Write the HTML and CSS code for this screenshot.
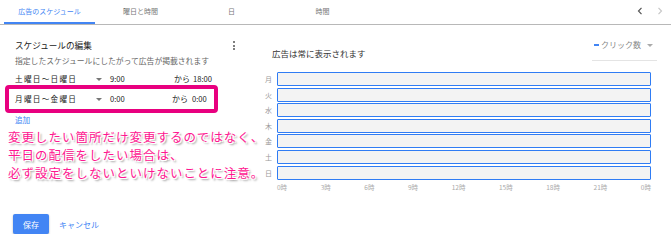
FILE: index.html
```html
<!DOCTYPE html>
<html lang="ja">
<head>
    <meta charset="UTF-8">
    <title>広告のスケジュール</title>
    <link rel="stylesheet" href="styles.css">
</head>
<body>

    <!-- タブ -->
    <div class="tabs">
        <div class="tab active">広告のスケジュール</div>
        <div class="tab">曜日と時間</div>
        <div class="tab">日</div>
        <div class="tab">時間</div>
        <div class="tab-nav">
            <svg width="6" height="8" viewBox="0 0 6 8"><path d="M4.5 0.8 L1.5 4 L4.5 7.2" fill="none" stroke="#555" stroke-width="1.2"/></svg>
            <svg width="6" height="8" viewBox="0 0 6 8"><path d="M1.5 0.8 L4.5 4 L1.5 7.2" fill="none" stroke="#c8c8c8" stroke-width="1.2"/></svg>
        </div>
    </div>

    <div class="content">
        <!-- スケジュールの編集 -->
        <div class="editor">
            <div class="editor-head">
                <div class="editor-title">スケジュールの編集</div>
                <div class="kebab"><i></i><i></i><i></i></div>
            </div>
            <div class="editor-sub">指定したスケジュールにしたがって広告が掲載されます</div>

            <div class="slot">
                <span class="slot-day">土曜日〜日曜日</span>
                <span class="caret"></span>
                <span class="slot-time">9:00</span>
                <span class="slot-to">から</span>
                <span class="slot-time">18:00</span>
            </div>
            <div class="slot highlight">
                <span class="slot-day">月曜日〜金曜日</span>
                <span class="caret"></span>
                <span class="slot-time">0:00</span>
                <span class="slot-to">から</span>
                <span class="slot-time">0:00</span>
            </div>
            <a class="add" href="#">追加</a>

            <div class="note">
                <div>変更したい箇所だけ変更するのではなく、</div>
                <div>平日の配信をしたい場合は、</div>
                <div>必ず設定をしないといけないことに注意。</div>
            </div>
        </div>

        <!-- グラフ -->
        <div class="chart">
            <div class="chart-head">
                <div class="chart-title">広告は常に表示されます</div>
                <div class="metric"><span class="dash"></span>クリック数<span class="caret"></span></div>
            </div>
            <div class="days">
                <span class="day">月</span><div class="bar"></div>
                <span class="day">火</span><div class="bar"></div>
                <span class="day">水</span><div class="bar"></div>
                <span class="day">木</span><div class="bar"></div>
                <span class="day">金</span><div class="bar"></div>
                <span class="day">土</span><div class="bar"></div>
                <span class="day">日</span><div class="bar"></div>
            </div>
            <div class="axis">
                <span>0時</span><span>3時</span><span>6時</span><span>9時</span><span>12時</span>
                <span>15時</span><span>18時</span><span>21時</span><span>0時</span>
            </div>
        </div>
    </div>

    <div class="actions">
        <button class="save">保存</button>
        <a class="cancel" href="#">キャンセル</a>
    </div>

</body>
</html>
```

FILE: styles.css
```css
body {
    margin: 0;
    font-family: "Noto Sans CJK JP", "Noto Sans", sans-serif;
    background: #fff;
    color: #333;
}

/* タブ */
.tabs {
    display: flex;
    align-items: stretch;
    height: 24px;
    padding-left: 4px;
    border-bottom: 1px solid #b8b8b8;
}

.tab {
    width: 91px;
    font-size: 7px;
    line-height: 22px;
    text-align: center;
    color: #777;
}

.tab.active {
    color: #4285f4;
    border-bottom: 2px solid #4285f4;
}

.tab-nav {
    margin-left: auto;
    display: flex;
    gap: 14px;
    padding: 7px 8px 0 0;
}

/* メイン */
.content {
    display: flex;
    gap: 29px;
    padding-left: 15px;
    height: 165px;
}

.editor {
    width: 221px;
    padding-top: 14px;
}

.editor-head {
    display: flex;
    justify-content: space-between;
}

.editor-title {
    font-size: 8.6px;
    line-height: 12px;
    color: #222;
}

.kebab {
    display: flex;
    flex-direction: column;
    gap: 1.5px;
    padding: 2px 1px 0 0;
}

.kebab i {
    width: 2px;
    height: 2px;
    background: #555;
    border-radius: 50%;
}

.editor-sub {
    margin-top: 4px;
    font-size: 7.8px;
    line-height: 12px;
    color: #666;
}

.slot {
    display: grid;
    grid-template-columns: 81px 14px 64px 19px auto;
    align-items: center;
    margin-top: 6px;
    font-size: 7.6px;
    line-height: 12px;
    color: #222;
}

.slot-day {
    letter-spacing: 1.3px;
}

.caret {
    width: 0;
    height: 0;
    border-left: 3px solid transparent;
    border-right: 3px solid transparent;
    border-top: 3px solid #777;
    justify-self: start;
}

.slot-to {
    font-size: 8px;
}

.slot.highlight {
    grid-template-columns: 81px 14px 62px 20px auto;
    width: 199px;
    margin: 0 0 0 -10px;
    padding: 4px 0 4px 6px;
    border: 4px solid #e8007f;
    border-radius: 4px;
}

.add {
    display: block;
    margin-top: 1px;
    font-size: 7.6px;
    line-height: 12px;
    color: #4285f4;
    text-decoration: none;
}

.note {
    margin: 2px 0 0 -7px;
    white-space: nowrap;
    font-size: 12.4px;
    letter-spacing: 1.1px;
    line-height: 18px;
    color: #ff1690;
    text-shadow: 1px 1px 0 #fff, -1px -1px 0 #fff, 1px -1px 0 #fff, -1px 1px 0 #fff,
                 2px 2px 2px rgba(0, 0, 0, 0.45);
}

/* グラフ */
.chart {
    width: 392px;
    padding-top: 14px;
}

.chart-head {
    display: flex;
    justify-content: space-between;
    align-items: flex-start;
    margin-bottom: 11px;
}

.chart-title {
    margin: 8px 0 0 7px;
    font-size: 8.5px;
    line-height: 12px;
    color: #333;
}

.metric {
    display: flex;
    align-items: center;
    width: 63px;
    padding: 0 0 9px 2px;
    font-size: 8px;
    line-height: 12px;
    color: #888;
    border-bottom: 1px solid #e4e4e4;
}

.metric .dash {
    width: 5px;
    height: 2px;
    margin-right: 2px;
    background: #4285f4;
}

.metric .caret {
    margin-left: 6px;
    border-top-color: #aaa;
}

.days {
    display: grid;
    grid-template-columns: 12px 374px;
    grid-auto-rows: 14px;
    row-gap: 1.6px;
}

.day {
    font-size: 7px;
    line-height: 14px;
    color: #999;
}

.bar {
    background: #f3f3f3;
    border: 1.6px solid #2f7cf4;
    border-radius: 1px;
}

.axis {
    display: flex;
    justify-content: space-between;
    width: 374px;
    margin: 2px 0 0 12px;
    font-size: 6.5px;
    line-height: 10px;
    color: #aaa;
}

/* ボタン */
.actions {
    display: flex;
    align-items: center;
    gap: 10px;
    padding: 24px 0 0 13px;
}

.save {
    width: 36px;
    height: 20px;
    padding: 0;
    border: none;
    border-radius: 2px;
    background: #4285f4;
    color: #fff;
    font-family: inherit;
    font-size: 8px;
    box-shadow: 0 1px 2px rgba(0, 0, 0, 0.3);
}

.cancel {
    font-size: 8px;
    color: #4285f4;
    text-decoration: none;
}
```
